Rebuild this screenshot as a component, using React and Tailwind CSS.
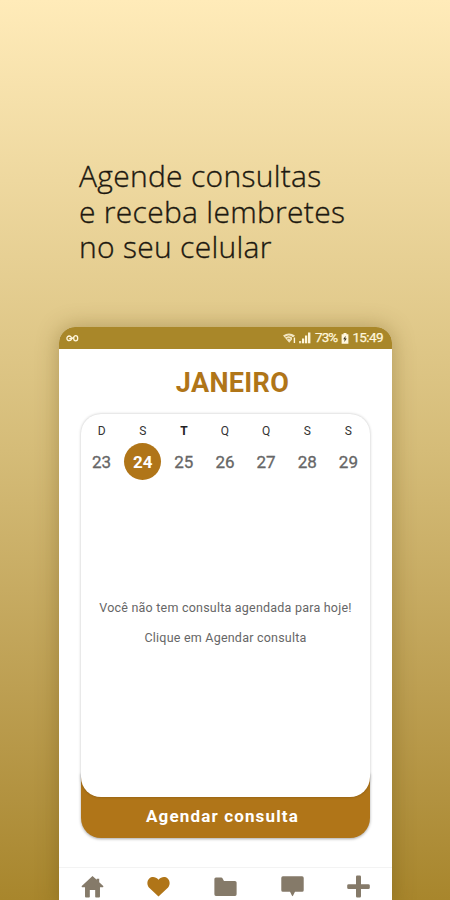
const weekDays = [
  { letter: 'D', day: 23 },
  { letter: 'S', day: 24 },
  { letter: 'T', day: 25, strong: true },
  { letter: 'Q', day: 26 },
  { letter: 'Q', day: 27 },
  { letter: 'S', day: 28 },
  { letter: 'S', day: 29 },
];

const navItems = [
  { id: 'home', path: 'M12 1 L0.8 11.4 Q0.3 12.8 1.3 12.8 H4.2 V22.4 Q4.2 23.4 5.2 23.4 H8.4 Q9.2 23.4 9.2 22.6 V15.6 H14.8 V22.6 Q14.8 23.4 15.6 23.4 H18.8 Q19.8 23.4 19.8 22.4 V12.8 H22.7 Q23.7 12.8 23.2 11.4 L19 7.5 V4 H16.4 V5 Z' },
  { id: 'health', active: true, path: 'M12 22.4 L2 13 C-0.4 10.3 0 5.6 2.4 3.6 C5.3 1.2 9.4 2 12 5 C14.6 2 18.7 1.2 21.6 3.6 C24 5.6 24.4 10.3 22 13 Z' },
  { id: 'files', path: 'M2 2.6 H7.4 Q8.6 2.6 9 3.6 L10.4 6.2 H21.8 Q23.6 6.2 23.6 7.8 V20.2 Q23.6 21.8 22 21.8 H2 Q0.4 21.8 0.4 20.2 V4.2 Q0.4 2.6 2 2.6 Z' },
  { id: 'chat', path: 'M2 1.4 H22 Q23.7 1.4 23.7 3 V15.8 Q23.7 17.4 22 17.4 H14.6 L12.5 21.7 Q12 22.4 11.5 21.7 L9.4 17.4 H2 Q0.3 17.4 0.3 15.8 V3 Q0.3 1.4 2 1.4 Z' },
  { id: 'add', path: 'M10.6 0.6 H13.4 Q14.6 0.6 14.6 1.8 V9.6 H22.2 Q23.8 9.6 23.8 11 V13.2 Q23.8 14.6 22.2 14.6 H14.6 V22.2 Q14.6 23.6 13.4 23.6 H10.6 Q9.4 23.6 9.4 22.2 V14.6 H1.8 Q0.2 14.6 0.2 13.2 V11 Q0.2 9.6 1.8 9.6 H9.4 V1.8 Q9.4 0.6 10.6 0.6 Z' },
];

function StatusBar() {
  return (
    <div className="flex h-[22px] items-center justify-between bg-[#a98729] pr-[9px] pl-[7px] text-[#fff6dc]">
      <svg width="13" height="9" viewBox="0 0 13 9" fill="none" stroke="currentColor" strokeWidth="1.3">
        <circle cx="3.2" cy="4.3" r="2.3" />
        <ellipse cx="9.7" cy="4.3" rx="2" ry="2.6" />
        <path d="M3.2 4.6 H6 L7.7 3" />
      </svg>
      <div className="flex items-center">
        <svg className="mr-[3px]" width="13" height="11" viewBox="0 0 13 11">
          <path d="M0 2.6 Q6 -1.6 12 2.6 L10.6 4 H9 V6.6 L6.2 9.8 Z" fill="currentColor" opacity="0.85" />
          <path d="M2.3 3.9 Q5.8 1.6 9 3.9 M4 6 Q5.8 4.7 7.4 6" fill="none" stroke="#a98729" strokeWidth="0.8" />
          <path d="M11.4 4.6 V10" stroke="currentColor" strokeWidth="1.4" />
        </svg>
        <svg className="mr-[4px]" width="12" height="12" viewBox="0 0 12 12" fill="currentColor">
          <rect x="0" y="9" width="2.2" height="2.3" opacity="0.8" />
          <rect x="3" y="6.5" width="2.2" height="4.8" />
          <rect x="6" y="3.5" width="2.2" height="7.8" />
          <rect x="9" y="0.5" width="2.4" height="10.8" />
        </svg>
        <span className="text-[13.5px] leading-none tracking-[-0.9px] [-webkit-text-stroke:0.25px_#fff6dc]">73%</span>
        <svg className="mr-[3px] ml-[4px]" width="8" height="11" viewBox="0 0 8 11">
          <path d="M2.5 0 H5.5 V1.2 H7.4 V10.8 H0.6 V1.2 H2.5 Z" fill="currentColor" />
          <path d="M4.6 2.8 L2.2 6.2 H3.7 L3.3 9 L5.8 5.4 H4.3 Z" fill="#3c3520" />
        </svg>
        <span className="text-[13.5px] leading-none tracking-[-0.6px] [-webkit-text-stroke:0.25px_#fff6dc]">15:49</span>
      </div>
    </div>
  );
}

function WeekStrip() {
  return (
    <div className="grid grid-cols-7 pt-[9px] pr-px text-center">
      {weekDays.map(({ letter, day, strong }) => (
        <div key={day} className="flex flex-col items-center">
          <span className={strong ? 'text-[12px] leading-4 font-bold text-[#222]' : 'text-[12px] leading-4 text-[#333]'}>
            {letter}
          </span>
          <span
            className={
              day === 24
                ? 'mt-[4px] flex size-[37px] items-center justify-center rounded-full bg-[#b07518] pt-[2px] text-[17px] font-bold text-white'
                : 'mt-[4px] flex size-[37px] items-center justify-center pt-[2px] text-[17px] text-[#666] [-webkit-text-stroke:0.3px_#666]'
            }
          >
            {day}
          </span>
        </div>
      ))}
    </div>
  );
}

function BottomNav() {
  return (
    <nav className="mt-[29px] grid h-[40px] grid-cols-5 border-t border-[#f3f3f3] pt-[7px]">
      {navItems.map(({ id, active, path }) => (
        <button key={id} aria-label={id} className="flex justify-center">
          <svg width="23" height="23" viewBox="0 0 24 24" fill={active ? '#b07518' : '#857a69'}>
            <path d={path} />
          </svg>
        </button>
      ))}
    </nav>
  );
}

export default function App() {
  return (
    <div className="h-[900px] w-[450px] overflow-hidden bg-linear-to-b from-[#ffebb9] via-[#d5bc78] to-[#a8862c] font-['Roboto',sans-serif]">
      <h1 className="pt-[158px] pl-[79px] font-['Open_Sans',sans-serif] text-[30px] leading-[35.5px] font-light tracking-[0.29px] text-[#1c1810] [-webkit-text-stroke:0.35px_#1c1810]">
        Agende consultas
        <br />
        e receba lembretes
        <br />
        no seu celular
      </h1>

      <main className="mt-[62.5px] ml-[59px] h-[580px] w-[333px] overflow-hidden rounded-t-[16px] bg-white shadow-[0_0_22px_rgba(90,65,10,0.35)]">
        <StatusBar />
        <h2 className="mt-[18px] pl-[14px] text-center text-[27px] leading-8 font-bold tracking-[0.35px] text-[#b07518]">JANEIRO</h2>

        <div className="mt-[15px] ml-[22px] w-[289px]">
          <section className="relative z-10 flex h-[383px] flex-col rounded-[20px] bg-white shadow-[0_0_3px_rgba(0,0,0,0.25)]">
            <WeekStrip />
            <div className="mt-[119px] text-center text-[12.5px] leading-[18px] tracking-[0.22px] text-[#666]">
              <p>Você não tem consulta agendada para hoje!</p>
              <p className="mt-[12px]">Clique em Agendar consulta</p>
            </div>
          </section>
          <button className="-mt-[24px] block h-[65px] w-full rounded-b-[20px] bg-[#b07518] pt-[22px] pr-[6px] text-[17px] font-bold tracking-[1.15px] text-white shadow-[0_1px_3px_rgba(0,0,0,0.35)]">
            Agendar consulta
          </button>
        </div>

        <BottomNav />
      </main>
    </div>
  );
}
